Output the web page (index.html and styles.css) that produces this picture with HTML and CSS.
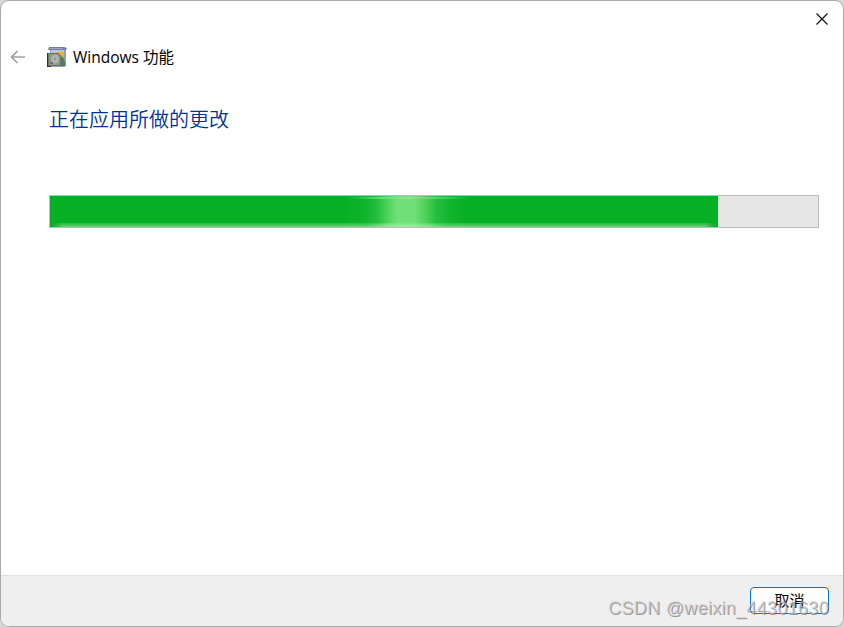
FILE: index.html
```html
<!DOCTYPE html>
<html lang="zh-CN">
<head>
<meta charset="utf-8">
<title>Windows 功能</title>
<link rel="stylesheet" href="styles.css">
</head>
<body>
<main class="window">
  <div class="titlebar">
    <svg class="close" viewBox="0 0 12 12" width="12" height="12"><path d="M.5.5l11 11M11.5.5l-11 11"/></svg>
  </div>
  <header class="header">
    <svg class="back" viewBox="0 0 16 14" width="16" height="14"><path d="M15 7H1.5M7.5 1l-6 6 6 6"/></svg>
    <svg class="app-icon" viewBox="0 0 20 20" width="20" height="20">
      <path fill="#8e9cc2" d="M3 3h16v16l-2 1H4z"/>
      <path fill="#7480a0" d="M2 0h15l3 1-1 2H1z"/>
      <path fill="#99a6c3" d="M3 1h13v1H3z"/>
      <path fill="#b9c3d9" d="M4 3h13v3H4z"/>
      <path fill="#efb321" d="M9 5h8v8H9z"/>
      <path fill="#fff0a0" d="M11 7h3v2h-3z"/>
      <path fill="#4b8058" d="M13 9l3 1 2 5v4H5V9z"/>
      <path fill="#697469" d="M1 6h10l3 2v11H1z"/>
      <path fill="#8d978b" d="M2 7h9l2 2v9H2z"/>
      <ellipse cx="8" cy="12" rx="4" ry="4.5" fill="#aeb5ac"/>
      <circle cx="8" cy="12" r="1.2" fill="#8b978b"/>
      <path fill="#303330" d="M0 6h1v13h3v1H0z"/>
      <path fill="#6c756d" d="M3 15h3v2H3z"/>
    </svg>
    <span class="title">Windows 功能</span>
  </header>
  <section class="content">
    <h1>正在应用所做的更改</h1>
    <div class="progress"><div class="fill"><div class="edge"></div><div class="glow"></div><div class="shine"></div></div></div>
  </section>
  <footer class="footer"><button>取消</button></footer>
  <div class="watermark">CSDN @weixin_44301630</div>
</main>
</body>
</html>
```
FILE: styles.css
```css
* { box-sizing: border-box; }
body {
  margin: 0;
  height: 627px;
  overflow: hidden;
  background: #d7d7d7;
  font-family: "Open Sans", "Noto Sans CJK SC", sans-serif;
}
.window {
  position: relative;
  display: flex;
  flex-direction: column;
  width: 844px;
  height: 627px;
  overflow: hidden;
  border: 1px solid #aaa;
  border-radius: 9px;
  background: #fff;
}
.titlebar {
  display: flex;
  justify-content: flex-end;
  height: 38px;
  padding: 12px 15px 0 0;
}
.close, .back { fill: none; stroke: #111; stroke-width: 1.2; }
.header {
  display: flex;
  align-items: center;
  height: 36px;
  padding-left: 9px;
}
.back { stroke: #a0a0a0; stroke-width: 1.7; }
.app-icon { margin-left: 21px; }
.title {
  margin-left: 6px;
  color: #000;
  font-size: 15.5px;
  line-height: 24px;
  white-space: nowrap;
}
.content { flex: 1; padding: 29px 24px 0 48px; }
h1 {
  margin: 0;
  height: 30px;
  color: #003399;
  font: 350 20px/30px "Noto Sans CJK SC", sans-serif;
}
.progress {
  width: 770px;
  height: 33px;
  margin-top: 61px;
  border: 1px solid #bcbcbc;
  background: #e6e6e6;
}
.fill {
  position: relative;
  width: 668px;
  height: 31px;
  background: #06b025;
}
.edge, .glow, .shine { position: absolute; }
.edge {
  inset: auto 0 0;
  height: 4px;
  background: linear-gradient(#27ba41, #67d279);
  mask-image: linear-gradient(90deg, transparent 2px, #000 14px, #000 654px, transparent 666px);
}
.glow {
  top: 0;
  bottom: 0;
  left: 295px;
  width: 120px;
  background: linear-gradient(90deg, transparent, rgba(120, 229, 125, .08) 17%, rgba(120, 229, 125, .28) 27%, rgba(120, 229, 125, .78) 39%, rgba(120, 229, 125, .92) 44%, rgba(120, 229, 125, .92) 58%, rgba(120, 229, 125, .66) 66%, rgba(120, 229, 125, .28) 76%, rgba(120, 229, 125, .08) 89%, transparent);
}
.glow::after {
  content: "";
  position: absolute;
  inset: auto 20px 0;
  height: 5px;
  background: radial-gradient(ellipse at bottom, #a5eea5, transparent 70%);
}
.shine {
  top: 1px;
  left: 298px;
  width: 122px;
  height: 2px;
  background: linear-gradient(90deg, transparent, #78df83 35%, #8de892 50%, #67d676 65%, transparent);
}
.footer {
  display: flex;
  justify-content: flex-end;
  height: 51px;
  padding: 11px 14px 0 0;
  border-top: 1px solid #dfdfdf;
  background: #efefef;
}
button {
  width: 79px;
  height: 27px;
  padding: 0 0 2px;
  border: 1px solid #0078d4;
  border-radius: 4px;
  background: #fdfdfd;
  color: #000;
  font: 400 15px/22px "Noto Sans CJK SC", sans-serif;
}
.watermark {
  position: absolute;
  top: 596px;
  left: 607px;
  color: rgba(205, 205, 205, .65);
  font: 400 18px/22px "Liberation Sans", sans-serif;
  letter-spacing: .3px;
  text-shadow: 1px 1px 0 rgba(105, 105, 105, .65);
  white-space: nowrap;
}
```
